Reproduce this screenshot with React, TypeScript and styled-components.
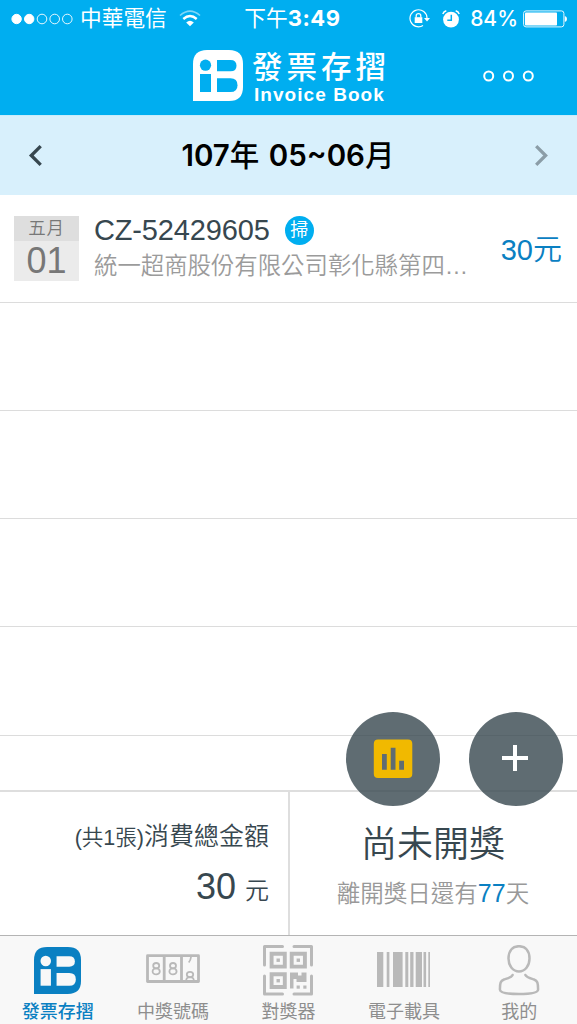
import React from 'react';
import styled, { createGlobalStyle } from 'styled-components';

const SANS = `"Liberation Sans", "Noto Sans CJK TC", sans-serif`;
const SYSTEM = `Inter, "Noto Sans CJK TC", sans-serif`;

const GlobalStyle = createGlobalStyle`
  * { box-sizing: border-box; }
  body { margin: 0; background: #fff; }
  svg { display: block; flex: none; }
`;

const Screen = styled.div`
  position: relative;
  display: flex;
  flex-direction: column;
  width: 577px;
  height: 1024px;
  overflow: hidden;
  background: #fff;
  color: #37474f;
  font-family: ${SANS};
  white-space: nowrap;
`;

const StatusBar = styled.div`
  display: grid;
  grid-template-columns: 1fr auto 1fr;
  align-items: center;
  height: 37px;
  padding: 0 10px 0 11px;
  background: #00aef0;
  color: #fff;
  font-family: ${SYSTEM};
`;

const StatusGroup = styled.div<{ $end?: boolean }>`
  display: flex;
  align-items: center;
  justify-content: ${p => (p.$end ? 'flex-end' : 'flex-start')};
`;

const Carrier = styled.span`
  margin: 0 12px 0 7px;
  font-size: 21.7px;
  font-weight: 400;
  line-height: 37px;
`;

const Clock = styled.span`
  margin-left: 7px;
  font-size: 21.7px;
  font-weight: 400;
  line-height: 37px;
  b { font-weight: 700; font-size: 22px; letter-spacing: 0.6px; }
`;

const BatteryLevel = styled.span`
  margin: 0 5px 0 10px;
  font-size: 21px;
  font-weight: 500;
  line-height: 37px;
`;

const Header = styled.header`
  display: flex;
  align-items: flex-start;
  height: 78px;
  padding: 13px 42px 0 193px;
  background: #00aef0;
  color: #fff;
`;

const Brand = styled.div`
  display: flex;
  flex-direction: column;
  margin-left: 9px;
  padding-top: 1px;
`;

const BrandName = styled.span`
  font-size: 30.5px;
  font-weight: 500;
  line-height: 32px;
  letter-spacing: 4px;
`;

const BrandSub = styled.span`
  margin-left: 2px;
  font-size: 19px;
  font-weight: 700;
  line-height: 24px;
  letter-spacing: 1.05px;
`;

const MoreButton = styled.button`
  margin: 20px 0 0 auto;
  padding: 0;
  border: 0;
  background: none;
`;

const PeriodBar = styled.div`
  display: flex;
  align-items: center;
  justify-content: space-between;
  height: 80px;
  padding: 0 28px 0 27px;
  border-top: 1px solid #c9ecfb;
  background: #d8f0fc;
  color: #000;
`;

const Period = styled.h1`
  margin: 0;
  font-family: ${SYSTEM};
  font-size: 29.5px;
  font-weight: 600;
  line-height: 79px;
  word-spacing: 2px;
  span { font-weight: 500; }
`;

const List = styled.main`
  display: flex;
  flex-direction: column;
  height: 595px;
  overflow: hidden;
`;

const Row = styled.div`
  display: flex;
  flex: none;
  align-items: flex-start;
  height: 108.12px;
  padding: 21px 15px 0 14px;
  border-bottom: 1px solid #dcdcdc;
`;

const DateBox = styled.div`
  width: 65px;
  height: 65px;
  background: #ebebeb;
  color: #777;
  text-align: center;
`;

const Month = styled.div`
  height: 25px;
  background: #dedede;
  font-size: 17.5px;
  font-weight: 350;
  line-height: 25px;
  letter-spacing: 0.8px;
`;

const Day = styled.div`
  font-size: 36px;
  line-height: 39px;
`;

const Details = styled.div`
  flex: 1;
  margin-left: 15px;
`;

const InvoiceLine = styled.div`
  display: flex;
  align-items: center;
  height: 29px;
  font-size: 29px;
  letter-spacing: -0.15px;
`;

const ScanBadge = styled.span`
  display: block;
  width: 29px;
  height: 29px;
  margin-left: 15px;
  border-radius: 50%;
  background: #00aef0;
  color: #fff;
  font-size: 18px;
  font-weight: 400;
  line-height: 29px;
  text-align: center;
`;

const Store = styled.div`
  color: #9b9b9b;
  font-size: 23.4px;
  font-weight: 350;
  line-height: 42px;
`;

const Amount = styled.div`
  color: #0a80c2;
  font-size: 29px;
  font-weight: 350;
  line-height: 68px;
`;

const Summary = styled.section`
  display: flex;
  height: 145px;
  border-top: 2px solid #dedede;
`;

const Total = styled.div`
  width: 290px;
  padding: 24px 19px 0 0;
  border-right: 2px solid #dedede;
  text-align: right;
`;

const TotalLabel = styled.div`
  font-size: 25px;
  font-weight: 350;
  line-height: 40px;
  small { font-size: 21.5px; }
`;

const TotalValue = styled.div`
  font-size: 24px;
  font-weight: 350;
  line-height: 58px;
  span { margin-right: 9px; font-size: 36px; }
`;

const Draw = styled.div`
  flex: 1;
  padding: 28px 1px 0 0;
  text-align: center;
`;

const DrawState = styled.div`
  font-size: 36px;
  font-weight: 350;
  line-height: 50px;
`;

const DrawCountdown = styled.div`
  color: #999;
  font-size: 23.5px;
  font-weight: 350;
  line-height: 46px;
  b { color: #0a80c2; font-weight: 400; font-size: 25px; }
`;

const TabBar = styled.nav`
  display: grid;
  grid-template-columns: repeat(5, 1fr);
  height: 89px;
  border-top: 1px solid #b4b4b4;
  background: #f8f8f8;
`;

const Tab = styled.div<{ $active?: boolean }>`
  display: flex;
  flex-direction: column;
  align-items: center;
  padding-top: 9px;
  color: ${p => (p.$active ? '#0a80c2' : '#8e8e8e')};
  font-size: 18px;
  font-weight: ${p => (p.$active ? 500 : 400)};
  line-height: 26px;
`;

const TabIcon = styled.span`
  display: flex;
  align-items: center;
  height: 51px;
  margin-bottom: 3px;
`;

const Actions = styled.div`
  position: absolute;
  top: 712px;
  right: 14px;
  display: flex;
  gap: 29px;
`;

const RoundButton = styled.button`
  display: flex;
  align-items: center;
  justify-content: center;
  width: 94px;
  height: 94px;
  padding: 0;
  border: 0;
  border-radius: 50%;
  background: rgba(55, 71, 79, 0.8);
`;

const StatusIcons = styled.span`
  display: flex;
  align-items: center;
  gap: 12px;
`;

const BrandMark = ({ width, height, fill, ink }: { width: number; height: number; fill: string; ink: string }) => (
  <svg width={width} height={height} viewBox="0 0 50 51" preserveAspectRatio="none">
    <path d="M0 51V14Q0 0 14 0H36Q50 0 50 14V37Q50 51 36 51Z" fill={fill} />
    <g fill={ink}>
      <circle cx="12.5" cy="15.2" r="5.6" />
      <rect x="7" y="24" width="11" height="18" />
      <path d="M24 10H37.5Q43.5 10 43.5 15.7Q43.5 21.3 37.5 21.3H24Z" />
      <path d="M24 28.3H37.5Q44.500 28.300 44.500 35.150Q44.500 42 37.500 42H24Z" />
    </g>
  </svg>
);

const SignalDots = () => (
  <svg width="62" height="12" viewBox="0 0 62 12" stroke="#fff">
    <circle cx="5.600" cy="6" r="4.700" fill="#fff" />
    <circle cx="18.200" cy="6" r="4.700" fill="#fff" />
    <g fill="none" strokeWidth=".9">
      <circle cx="31" cy="6" r="4.800" />
      <circle cx="43.700" cy="6" r="4.800" />
      <circle cx="56.300" cy="6" r="4.800" />
    </g>
  </svg>
);

const Wifi = () => (
  <svg width="22" height="17" viewBox="0 0 22 17" fill="none" stroke="#fff" strokeWidth="2.4">
    <path d="M1 5.500Q11-3.200 21 5.500" opacity=".5" strokeWidth="1.600" />
    <path d="M4.300 9Q11 3.200 17.700 9" />
    <path d="M7.200 12.500Q11 9 14.800 12.500L11 16.300Z" fill="#fff" stroke="none" />
  </svg>
);

const RotationLock = () => (
  <svg width="21" height="19" viewBox="0 0 21 19" fill="none" stroke="#fff">
    <path d="M18 9A8.500 8.500 0 1 0 14 16.500" strokeWidth="1.200" />
    <path d="M15 9H21L18 12.500Z" fill="#fff" stroke="none" />
    <rect x="5.700" y="8.200" width="7.600" height="5.800" fill="#fff" stroke="none" />
    <path d="M7.200 8.500V6.700Q7.200 4.600 9.500 4.600Q11.800 4.600 11.800 6.700V8.500" strokeWidth="1.300" />
  </svg>
);

const Alarm = () => (
  <svg width="18" height="18" viewBox="0 0 18 18">
    <circle cx="9" cy="9.600" r="7.900" fill="#fff" />
    <path d="M.8 4Q1.700 1.600 4.300.8M17.200 4Q16.300 1.600 13.700.8" fill="none" stroke="#fff" strokeWidth="1.500" />
    <path d="M9.300 4.800V10.200H5.300" fill="none" stroke="#00aef0" strokeWidth="1.500" />
  </svg>
);

const Battery = () => (
  <svg width="44" height="18" viewBox="0 0 44 18">
    <rect x=".6" y=".9" width="40.300" height="16" rx="2.500" fill="none" stroke="#fff" strokeWidth=".9" />
    <rect x="2" y="2.500" width="32" height="13" rx=".8" fill="#fff" />
    <path d="M41.800 6Q44 6.300 44 9Q44 11.700 41.800 12Z" fill="#fff" />
  </svg>
);

const MoreDots = () => (
  <svg width="52" height="12" viewBox="0 0 52 12" fill="none" stroke="#fff" strokeWidth="2">
    <circle cx="5.700" cy="6" r="4.500" />
    <circle cx="25.500" cy="6" r="4.500" />
    <circle cx="45.300" cy="6" r="4.500" />
  </svg>
);

const Chevron = ({ next }: { next?: boolean }) => (
  <svg width="16" height="24" viewBox="0 0 16 24" fill="none" stroke={next ? '#8b9da7' : '#37474f'} strokeWidth="3.300">
    <path d={next ? 'M3.200 2.200L12.600 11.500L3.200 20.800' : 'M13.700 2.200L4.300 11.500L13.700 20.800'} />
  </svg>
);

const ChartIcon = () => (
  <svg width="40" height="40" viewBox="0 0 40 40">
    <path
      fillRule="evenodd"
      fill="#f1b900"
      d="M5 .5H35Q39.300.500 39.300 4.800V34.700Q39.300 39 35 39H5Q.8 39 .8 34.700V4.800Q.8.500 5 .5ZM9 15V30.700H13.800V15ZM17.700 8.800V30.700H22.500V8.800ZM26.200 21.700V30.700H31V21.700Z"
    />
  </svg>
);

const PlusIcon = () => (
  <svg width="30" height="30" viewBox="0 0 30 30" stroke="#fff" strokeWidth="4">
    <path d="M1 14H27M14 1V27" />
  </svg>
);

const NumbersIcon = () => (
  <svg width="54" height="51" viewBox="0 0 54 51">
    <path d="M1.500 10.700H52.500V36.500H1.500ZM18.200 10.700V36.500M35.500 10.700V36.500" fill="none" stroke="#b9b9b9" strokeWidth="2.800" strokeLinejoin="round" />
    <g fill="none" stroke="#b9b9b9" strokeWidth="1.800">
      <ellipse cx="10.200" cy="20.700" rx="3" ry="2.700" />
      <ellipse cx="10.200" cy="26.400" rx="3.600" ry="3" />
      <ellipse cx="27" cy="20.700" rx="3" ry="2.700" />
      <ellipse cx="27" cy="26.400" rx="3.600" ry="3" />
      <ellipse cx="44" cy="29.500" rx="3.200" ry="2.700" />
      <path d="M40.200 36Q40 32.300 44 32.200Q48 32.300 47.800 36M45 12Q44.600 15.500 42.700 17.500" />
    </g>
  </svg>
);

const QrIcon = () => (
  <svg width="50" height="51" viewBox="0 0 50 51" fill="none" stroke="#b9b9b9">
    <path
      d="M19.500 1.500H1.500V20M31 1.500H48.500V20M1.500 31V49H19.500M31 49H48.500V31"
      strokeWidth="3"
      strokeLinecap="round"
      strokeLinejoin="round"
    />
    <path d="M8.600 8.800H21.800V21.600H8.600ZM28.700 8.800H41.900V21.600H28.700ZM8.600 29.200H21.800V42H8.600Z" strokeWidth="3.900" />
    <g fill="#b9b9b9" stroke="none">
      <rect x="13.500" y="13.500" width="3.400" height="3.400" />
      <rect x="33.600" y="13.500" width="3.400" height="3.400" />
      <rect x="13.500" y="34" width="3.400" height="3.400" />
      <path d="M27 27.500H35V30.500H38.500V27.500H43.500V37H33.500V34H30.500V43.500H27Z" />
      <rect x="33.600" y="40.500" width="3.200" height="3.200" />
      <rect x="40.300" y="40.500" width="3.200" height="3.200" />
    </g>
  </svg>
);

const BarcodeIcon = () => (
  <svg width="54" height="51" viewBox="0 0 54 51" fill="#b9b9b9">
    <rect x="0" y="7" width="6.300" height="35" />
    <rect x="9.700" y="7" width="2.700" height="35" />
    <rect x="16" y="7" width="9.600" height="35" />
    <rect x="28.300" y="7" width="3" height="35" />
    <rect x="33.200" y="7" width="3.300" height="35" />
    <rect x="38.700" y="7" width="6.300" height="35" />
    <rect x="46.500" y="7" width="2.600" height="35" />
    <rect x="51.300" y="7" width="1.700" height="35" />
  </svg>
);

const PersonIcon = () => (
  <svg width="42" height="51" viewBox="0 0 42 51" fill="none" stroke="#b9b9b9" strokeWidth="2.500" strokeLinecap="round">
    <path d="M21 1.200C27.500 1.200 31.500 6 31.500 13.500C31.500 21 27 26.500 21 26.500C15 26.500 10.500 21 10.500 13.500C10.500 6 14.500 1.200 21 1.200Z" />
    <path d="M14.600 30C13.500 32.500 10 33.300 6 34.500C2.500 35.700 1.900 38 1.900 44.500C1.900 47.800 10 49 21 49C32 49 40.100 47.800 40.100 44.500C40.100 38 39.500 35.700 36 34.500C32 33.300 28.500 32.500 27.400 30" />
  </svg>
);

export default function App() {
  return (
    <Screen>
      <GlobalStyle />
      <StatusBar>
        <StatusGroup>
          <SignalDots />
          <Carrier>中華電信</Carrier>
          <Wifi />
        </StatusGroup>
        <Clock>下午<b>3:49</b></Clock>
        <StatusGroup $end>
          <StatusIcons>
            <RotationLock />
            <Alarm />
          </StatusIcons>
          <BatteryLevel>84%</BatteryLevel>
          <Battery />
        </StatusGroup>
      </StatusBar>
      <Header>
        <BrandMark width={50} height={51} fill="#fff" ink="#00aef0" />
        <Brand>
          <BrandName>發票存摺</BrandName>
          <BrandSub>Invoice Book</BrandSub>
        </Brand>
        <MoreButton aria-label="more"><MoreDots /></MoreButton>
      </Header>
      <PeriodBar>
        <Chevron />
        <Period>107<span>年</span> 05~06<span>月</span></Period>
        <Chevron next />
      </PeriodBar>
      <List>
        <Row>
          <DateBox>
            <Month>五月</Month>
            <Day>01</Day>
          </DateBox>
          <Details>
            <InvoiceLine>CZ-52429605<ScanBadge>掃</ScanBadge></InvoiceLine>
            <Store>統一超商股份有限公司彰化縣第四…</Store>
          </Details>
          <Amount>30元</Amount>
        </Row>
        <Row />
        <Row />
        <Row />
        <Row />
      </List>
      <Summary>
        <Total>
          <TotalLabel><small>(共1張)</small>消費總金額</TotalLabel>
          <TotalValue><span>30</span>元</TotalValue>
        </Total>
        <Draw>
          <DrawState>尚未開獎</DrawState>
          <DrawCountdown>離開獎日還有<b>77</b>天</DrawCountdown>
        </Draw>
      </Summary>
      <TabBar>
        <Tab $active>
          <TabIcon><BrandMark width={47} height={47} fill="#0a80c2" ink="#f8f8f8" /></TabIcon>
          發票存摺
        </Tab>
        <Tab><TabIcon><NumbersIcon /></TabIcon>中獎號碼</Tab>
        <Tab><TabIcon><QrIcon /></TabIcon>對獎器</Tab>
        <Tab><TabIcon><BarcodeIcon /></TabIcon>電子載具</Tab>
        <Tab><TabIcon><PersonIcon /></TabIcon>我的</Tab>
      </TabBar>
      <Actions>
        <RoundButton aria-label="statistics"><ChartIcon /></RoundButton>
        <RoundButton aria-label="add"><PlusIcon /></RoundButton>
      </Actions>
    </Screen>
  );
}
